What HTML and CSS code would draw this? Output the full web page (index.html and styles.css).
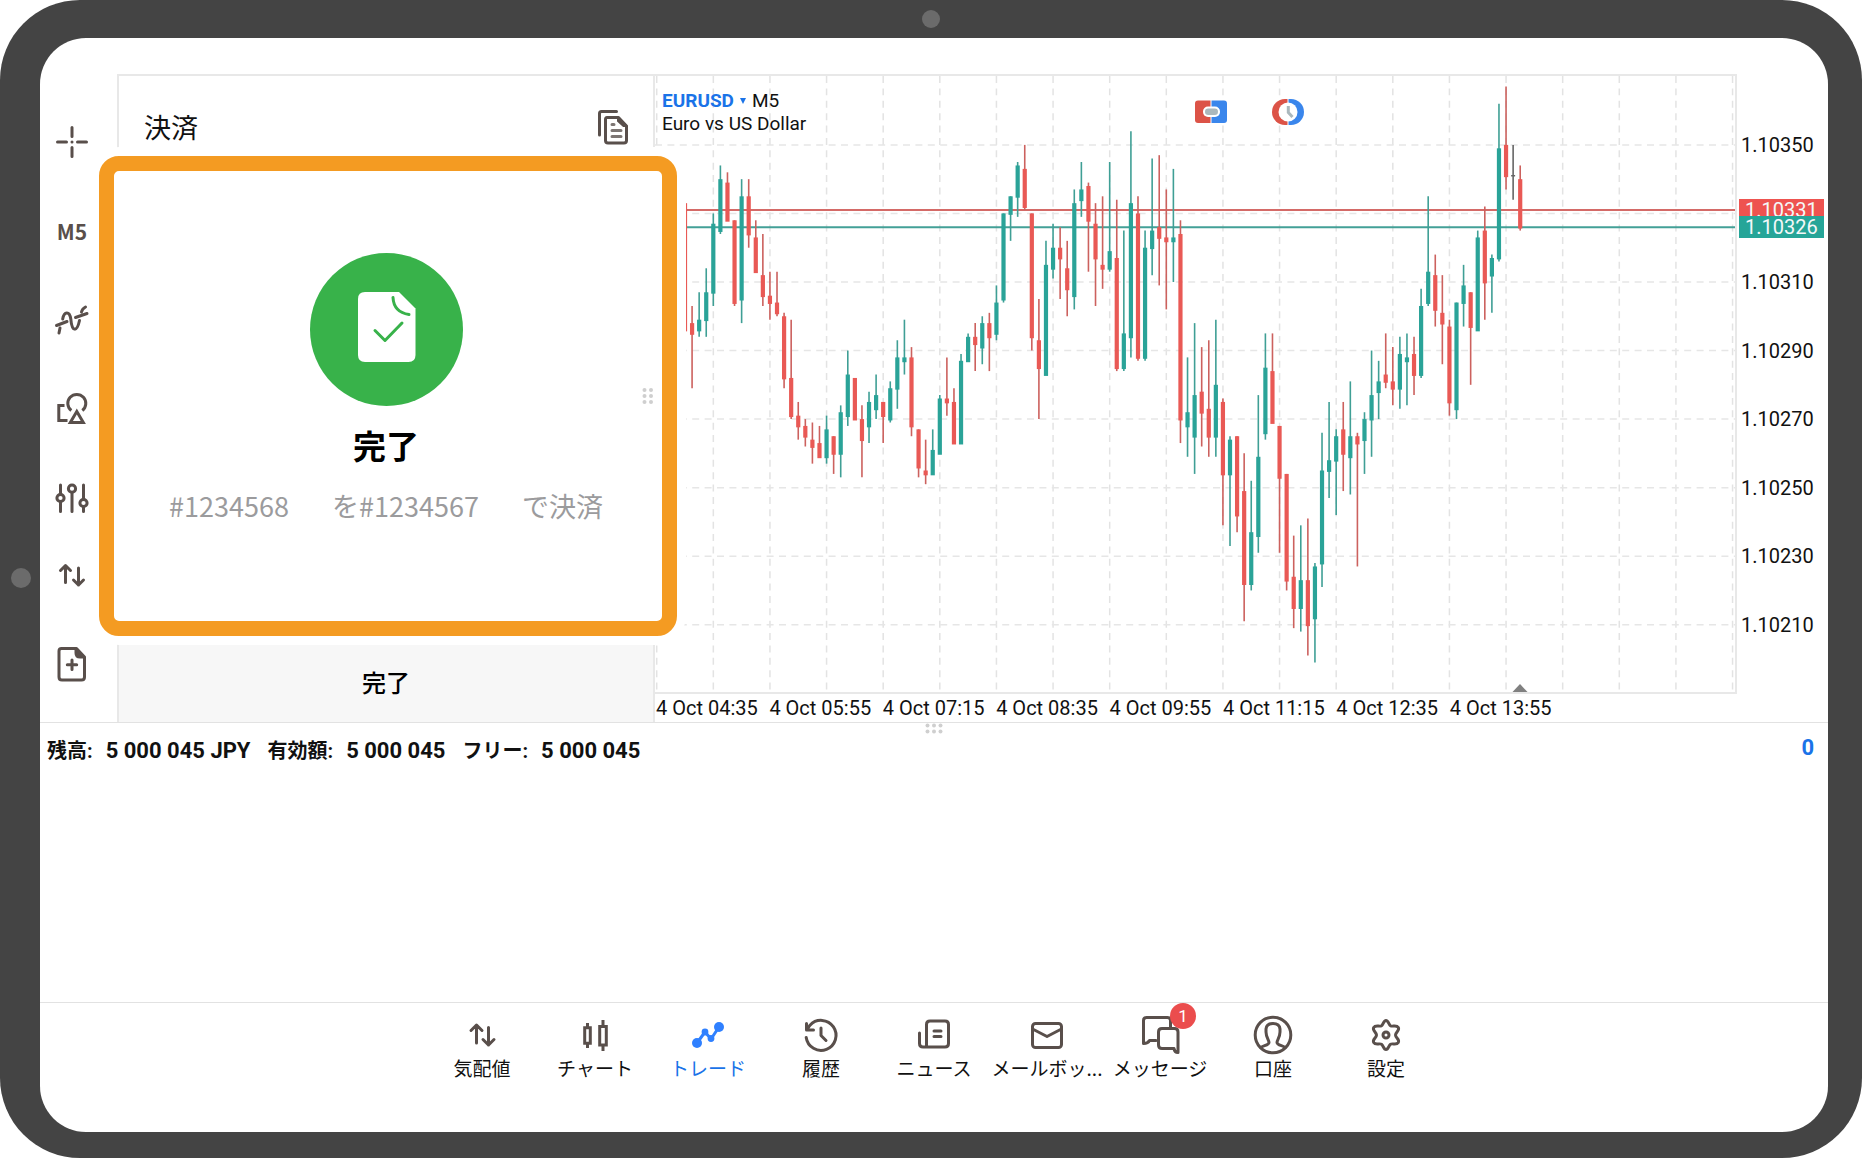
FILE: index.html
```html
<!DOCTYPE html>
<html lang="ja">
<head>
<meta charset="utf-8">
<meta name="viewport" content="width=device-width, initial-scale=1">
<title>決済 - EURUSD</title>
<link rel="stylesheet" href="styles.css">
</head>
<body>
<div class="device">
  <span class="camera camera-top"></span>
  <span class="camera camera-side"></span>
  <div class="screen">
    <main class="workspace">
      <div class="toolbar" role="toolbar" aria-label="チャートツール">
        <div class="tool-group">
          <button class="tool" type="button" aria-label="クロスヘア">
            <svg class="icon" width="36" height="36" viewBox="0 0 36 36"><path d="M3.500 18H12.500M23.500 18H32.500M18 3.500V12.500M18 23.500V32.500M18 18h.01"/></svg>
          </button>
          <button class="tool" type="button">M5</button>
          <button class="tool" type="button" aria-label="インディケータ">
            <svg class="icon" width="36" height="36" viewBox="0 0 36 36"><path d="M2.500 23.500L13 19.500M21.500 15.500L33 11.500M8.700 17C10 9.500 15.500 8.500 16.800 17C18 30.500 23 30 25.500 18.500M5 31l1-5M27.500 10C28 7.500 29.500 6 31.500 5"/></svg>
          </button>
          <button class="tool" type="button" aria-label="オブジェクト">
            <svg class="icon miter" width="36" height="36" viewBox="0 0 36 36"><path d="M10.500 14.500H4.800V29.500H13.500M17.300 19.500A9 9 0 1 1 28.300 19.500M22.800 20.500L16.300 31.500H29.300Z"/></svg>
          </button>
          <button class="tool" type="button" aria-label="設定">
            <svg class="icon" width="36" height="36" viewBox="0 0 36 36"><path d="M6.500 5V14M6.500 22V31.500M18 12.500V31.500M29.500 5V19M29.500 27V31.500"/><circle cx="6.500" cy="18" r="3.600"/><circle cx="18" cy="8.700" r="3.600"/><circle cx="29.500" cy="23" r="3.600"/></svg>
          </button>
        </div>
        <div class="tool-group">
          <button class="tool" type="button" aria-label="取引">
            <svg class="icon" width="36" height="36" viewBox="0 0 36 36"><path d="M11.500 25.500V8.500M6.500 13.500L11.500 8.500L16.500 13.500M24.500 11V28M19.500 23L24.500 28L29.500 23"/></svg>
          </button>
          <button class="tool" type="button" aria-label="新規注文">
            <svg class="icon" width="36" height="36" viewBox="0 0 36 36"><path d="M7.500 2.500H22.500L30.500 11V31Q30.500 34 27.500 34H8Q5 34 5 31V5Q5 2.500 7.500 2.500Z"/><path class="solid" d="M21.500 2.500V7Q21.500 11.500 26 11.500H30.500Z"/><path d="M18 14V23.500M13.300 18.800H22.700"/></svg>
          </button>
        </div>
      </div>

      <section class="panel">
        <header class="panel-head">
          <h1 class="panel-title">決済</h1>
          <button class="plain" type="button" aria-label="コピー">
            <svg class="icon" width="32" height="36" viewBox="0 0 32 36"><path d="M2.500 26V4.500Q2.500 2.500 4.500 2.500H19.500"/><path d="M10 8.500H21.500L29.500 17V31.500Q29.500 34 27 34H11Q8.500 34 8.500 31.500V10.500Q8.500 8.500 10 8.500Z"/><path class="solid" d="M21 8.500V12L26.500 17H29.500Z"/><path class="faint" d="M15 15.500h2M15 21.500H24M15 27.500H24"/></svg>
          </button>
        </header>
        <div class="result">
          <svg class="done-mark" width="153" height="153" viewBox="0 0 153 153" aria-hidden="true">
            <circle cx="76.500" cy="76.500" r="76.500" fill="#38b24a"/>
            <path d="M55 39H89L105.500 55.500V102Q105.500 109 98.500 109H55Q48 109 48 102V46Q48 39 55 39Z" fill="#fff"/>
            <path d="M83 44.500C83.500 54 89 60 99 61.500" fill="none" stroke="#38b24a" stroke-width="3" stroke-linecap="round"/>
            <path d="M65 77.500L75 87.500L92 70" fill="none" stroke="#38b24a" stroke-width="3" stroke-linecap="round" stroke-linejoin="round"/>
          </svg>
          <h2 class="result-title">完了</h2>
          <p class="result-text"><span>#1234568</span><span>を#1234567</span><span>で決済</span></p>
          <svg class="grip grip-side" width="12" height="18" viewBox="0 0 12 18" aria-hidden="true"><circle cx="2.500" cy="3" r="2"/><circle cx="9" cy="3" r="2"/><circle cx="2.500" cy="9" r="2"/><circle cx="9" cy="9" r="2"/><circle cx="2.500" cy="15" r="2"/><circle cx="9" cy="15" r="2"/></svg>
        </div>
        <button class="panel-done" type="button">完了</button>
      </section>

      <section class="chart" aria-label="EURUSD M5">
        <div class="plot">
          <svg class="plot-svg" id="plot" viewBox="0 0 1080 617" preserveAspectRatio="none" aria-hidden="true"></svg>
          <div class="plot-head">
            <div><button class="symbol" type="button">EURUSD<svg class="caret" width="6" height="6" viewBox="0 0 6 6" aria-hidden="true"><path d="M0 0H6L3 6Z" fill="#1a73e8"/></svg></button>M5</div>
            <div>Euro vs US Dollar</div>
          </div>
          <div class="plot-actions">
            <button class="plain" type="button" aria-label="ワンクリック取引">
              <svg width="32" height="26" viewBox="0 0 32 26"><path d="M15.500 1.500H3Q0 1.500 0 4.500V21Q0 24 3 24H15.500Z" fill="#dc5347"/><path d="M16.500 1.500H29Q32 1.500 32 4.500V21Q32 24 29 24H16.500Z" fill="#3a86ec"/><rect x="8" y="7.500" width="17" height="10.500" rx="5" fill="#fff"/><rect x="10" y="9.500" width="13" height="6.500" rx="3.200" fill="#abb8bd"/></svg>
            </button>
            <button class="plain" type="button" aria-label="取引履歴">
              <svg width="32" height="26" viewBox="0 0 32 26"><path d="M15.500 0H13A13 13 0 0 0 13 26H15.500Z" fill="#dc5347"/><path d="M16.500 0H19A13 13 0 0 1 19 26H16.500Z" fill="#3a86ec"/><circle cx="16" cy="13" r="9.500" fill="#fff"/><path d="M16.300 7V13.500L20.500 18" fill="none" stroke="#abb8bd" stroke-width="3"/></svg>
            </button>
          </div>
        </div>
        <div class="prices">
          <span>1.10350</span><span></span><span>1.10310</span><span>1.10290</span><span>1.10270</span><span>1.10250</span><span>1.10230</span><span>1.10210</span>
          <strong class="tag tag-ask">1.10331</strong>
          <strong class="tag tag-bid">1.10326</strong>
        </div>
        <div class="times">
          <span>4 Oct 04:35</span><span>4 Oct 05:55</span><span>4 Oct 07:15</span><span>4 Oct 08:35</span><span>4 Oct 09:55</span><span>4 Oct 11:15</span><span>4 Oct 12:35</span><span>4 Oct 13:55</span>
        </div>
      </section>
    </main>

    <section class="positions">
      <svg class="grip grip-bottom" width="18" height="12" viewBox="0 0 18 12" aria-hidden="true"><circle cx="2.500" cy="2.500" r="2"/><circle cx="9" cy="2.500" r="2"/><circle cx="15.500" cy="2.500" r="2"/><circle cx="2.500" cy="8.500" r="2"/><circle cx="9" cy="8.500" r="2"/><circle cx="15.500" cy="8.500" r="2"/></svg>
      <dl class="balance">
        <div><dt>残高:</dt><dd>5 000 045 JPY</dd></div>
        <div><dt>有効額:</dt><dd>5 000 045</dd></div>
        <div><dt>フリー:</dt><dd>5 000 045</dd></div>
      </dl>
      <output class="profit">0</output>
    </section>

    <nav class="tabs">
      <a class="tab" href="#quotes">
        <svg class="icon" width="40" height="40" viewBox="0 0 40 40"><path d="M14.500 28V10M9 15.500L14.500 10L20 15.500M26.500 12.500V30M21 24.500L26.500 30L32 24.500"/></svg>気配値</a>
      <a class="tab" href="#chart">
        <svg class="icon miter" width="40" height="40" viewBox="0 0 40 40"><path d="M9.700 12.700H15.300V28.300H9.700ZM12.500 8V12M12.500 29V33M24.700 11.500H31.300V30H24.700ZM28 5V11M28 31V36"/></svg>チャート</a>
      <a class="tab active" href="#trade" aria-current="page">
        <svg class="icon" width="40" height="40" viewBox="0 0 40 40"><path d="M9 28L17 17L23 24L31 12"/><g class="dots"><circle cx="9" cy="28" r="5"/><circle cx="17" cy="17" r="3.400"/><circle cx="23" cy="23.500" r="3.400"/><circle cx="31" cy="12" r="5"/></g></svg>トレード</a>
      <a class="tab" href="#history">
        <svg class="icon" width="40" height="40" viewBox="0 0 40 40"><path d="M5.200 22.500A15 15 0 1 0 9 10.200L6 14.500M5.500 8.500V15H12.500M20 13V20.500L25 25.500"/></svg>履歴</a>
      <a class="tab" href="#news">
        <svg class="icon" width="40" height="40" viewBox="0 0 40 40"><path d="M16 6H31Q34.500 6 34.500 9.500V28.500Q34.500 32 31 32H9Q5.500 32 5.500 28.500V18M12.500 32V9.500Q12.500 6 16 6M20 16H27M20 21.500H27"/></svg>ニュース</a>
      <a class="tab" href="#mailbox">
        <svg class="icon" width="40" height="40" viewBox="0 0 40 40"><rect x="5.500" y="8.500" width="29" height="24" rx="3"/><path d="M6.500 14.500L20 21.500L33.500 14.500"/></svg>メールボッ...</a>
      <a class="tab" href="#messages">
        <svg class="icon" width="40" height="40" viewBox="0 0 40 40"><path d="M16 25.500H9.500Q8 28.500 3.500 28.500V5.500Q3.500 2.500 6.500 2.500H27.500Q30.500 2.500 30.500 5.500V12"/><path d="M22 13.500H34.500Q38 13.500 38 17V37.500Q34.500 37.500 34 33.500H22Q18.500 33.500 18.500 30V17Q18.500 13.500 22 13.500Z"/></svg><span class="badge">1</span>メッセージ</a>
      <a class="tab" href="#accounts">
        <svg class="icon" width="40" height="40" viewBox="0 0 40 40"><circle cx="20" cy="20" r="17.800"/><path d="M8 32.500C9.500 30.500 16 30.500 16 27.500C16 25 13 22 13 17V14Q13.500 8.500 20 8.500Q26.500 8.500 27 14V17C27 22 24 25 24 27.500C24 30.500 30.500 30.500 32 32.500"/></svg>口座</a>
      <a class="tab" href="#settings">
        <svg class="icon" width="40" height="40" viewBox="0 0 40 40"><path d="M20 5.500C22.500 5.500 22.500 9.500 24.500 10.800C26.500 12 30.500 9.500 32.300 12.500C34 15.500 29.500 17 29.500 20C29.500 23 34 24.500 32.300 27.500C30.500 30.500 26.500 28 24.500 29.200C22.500 30.500 22.500 34.500 20 34.500C17.500 34.500 17.500 30.500 15.500 29.200C13.500 28 9.500 30.500 7.700 27.500C6 24.500 10.500 23 10.500 20C10.500 17 6 15.500 7.700 12.500C9.500 9.500 13.500 12 15.500 10.800C17.500 9.500 17.500 5.500 20 5.500Z"/><circle cx="20" cy="20" r="3"/></svg>設定</a>
    </nav>
  </div>
</div>
<script src="chart.js"></script>
</body>
</html>
```
FILE: styles.css
```css
* {
  box-sizing: border-box;
}

body {
  margin: 0;
  background: #fff;
  color: #111;
  font-family: Roboto, "Noto Sans CJK JP", sans-serif;
  font-size: 20px;
}

h1, h2, p, dl, dd {
  margin: 0;
}

button {
  margin: 0;
  padding: 0;
  border: 0;
  background: none;
  color: inherit;
  font: inherit;
  cursor: pointer;
}

svg {
  display: block;
}

.device {
  position: relative;
  display: flex;
  min-height: 100vh;
  padding: 38px 34px 26px 40px;
  border-radius: 80px;
  background: #444;
}

.camera {
  position: absolute;
  width: 18px;
  height: 18px;
  border-radius: 50%;
  background: #6b6b6b;
}

.camera-top {
  top: 10px;
  left: calc(50% - 9px);
}

.camera-side {
  top: calc(50% - 11px);
  left: 11px;
  width: 20px;
  height: 20px;
}

.screen {
  display: flex;
  flex: 1;
  flex-direction: column;
  min-width: 0;
  padding-top: 36px;
  border-radius: 46px;
  background: #fff;
}

.workspace {
  display: grid;
  flex: 1;
  grid-template-columns: 77px 538px 1fr;
  border-bottom: 1px solid #e2e2e2;
}

.icon {
  fill: none;
  stroke: #594f4b;
  stroke-width: 3;
  stroke-linecap: round;
  stroke-linejoin: round;
}

.icon.miter {
  stroke-linecap: butt;
  stroke-linejoin: miter;
}

.icon .solid {
  fill: #594f4b;
  stroke-width: 2;
}

.icon .faint {
  stroke: #7d7673;
}

/* Left toolbar */
.toolbar {
  display: flex;
  flex-direction: column;
  justify-content: space-between;
  padding: 34px 13px 25px 0;
}

.tool-group {
  display: flex;
  flex-direction: column;
  gap: 22px;
}

.tool {
  display: flex;
  align-items: center;
  justify-content: center;
  height: 67px;
  color: #594f4b;
  font-family: "Noto Sans CJK JP", sans-serif;
  font-size: 21px;
  font-weight: 700;
  line-height: 30px;
}

/* Order panel */
.panel {
  display: flex;
  flex-direction: column;
  border: solid #e8e8e8;
  border-width: 2px 2px 0;
}

.panel-head {
  display: flex;
  align-items: center;
  justify-content: space-between;
  height: 72px;
  padding: 29px 24px 0 25px;
}

.panel-title {
  padding-top: 4px;
  font-size: 27px;
  font-weight: 400;
  line-height: 40px;
}

.result {
  position: relative;
  z-index: 1;
  display: flex;
  flex: 1;
  flex-direction: column;
  align-items: center;
  margin: 8px -24px 9px -20px;
  padding: 82px 4px 0 0;
  border: 15px solid #f49b22;
  border-radius: 20px;
  background: #fff;
  box-shadow: 0 0 0 9px #fff;
}

.result-title {
  margin-top: 18px;
  color: #000;
  font-size: 33px;
  font-weight: 700;
  line-height: 48px;
}

.result-text {
  display: flex;
  gap: 43px;
  margin-top: 14px;
  color: #9b9b9d;
  font-family: "Noto Sans CJK JP", sans-serif;
  font-size: 27px;
  line-height: 40px;
}

.grip {
  position: absolute;
  fill: #cfcfcf;
}

.grip-side {
  top: 50%;
  right: 8px;
  transform: translateY(-50%);
}

.grip-bottom {
  top: 0;
  left: 50%;
  transform: translateX(-50%);
}

.panel-done {
  height: 77px;
  padding-bottom: 4px;
  background: #f7f7f7;
  color: #000;
  font-size: 24px;
  font-weight: 500;
}

/* Chart */
.chart {
  display: grid;
  grid-template-rows: 1fr 28px;
  grid-template-columns: 1fr 91px;
  min-width: 0;
}

.plot {
  position: relative;
  border: solid #e8e8e8;
  border-width: 2px 2px 2px 0;
}

.plot-svg {
  position: absolute;
  width: 100%;
  height: 100%;
}

.plot-head {
  position: absolute;
  top: 13px;
  left: 7px;
  font-size: 19px;
  line-height: 23px;
}

.symbol {
  display: inline-flex;
  align-items: center;
  gap: 6px;
  margin-right: 6px;
  color: #1a73e8;
  font-weight: 700;
}

.plot-actions {
  position: absolute;
  top: 23px;
  left: 50%;
  display: flex;
  gap: 45px;
}

.prices {
  position: relative;
  display: flex;
  flex-direction: column;
  padding: 37px 0 35px 4px;
}

.prices span {
  display: flex;
  flex: 1;
  align-items: center;
}

.tag {
  position: absolute;
  left: 2px;
  width: 85px;
  padding-left: 6px;
  color: #f4f8f8;
  font-weight: 400;
  line-height: 22px;
  transform: translateY(-50%);
}

.tag-ask {
  top: 22%;
  background: #ee5350;
}

.tag-bid {
  top: calc(22% + 17px);
  background: #26a598;
}

.times {
  display: grid;
  grid-template-columns: repeat(8, 10.49%);
  grid-column: 1 / 2;
  align-items: center;
  padding-left: 1px;
  line-height: 26px;
  white-space: nowrap;
}

/* Account summary */
.positions {
  position: relative;
  display: flex;
  justify-content: space-between;
  height: 279px;
  padding: 12px 14px 0 7px;
}

.balance {
  display: flex;
  gap: 17px;
  height: 32px;
}

.balance div {
  display: flex;
  gap: 13px;
  align-items: center;
}

.balance dt {
  font-size: 20px;
  font-weight: 700;
  line-height: 30px;
}

.balance dd {
  font-size: 22px;
  font-weight: 700;
  line-height: 30px;
}

.profit {
  color: #1a73e8;
  font-size: 22px;
  font-weight: 700;
  line-height: 26px;
}

/* Bottom tabs */
.tabs {
  display: flex;
  justify-content: center;
  height: 130px;
  padding-top: 12px;
  border-top: 1px solid #e2e2e2;
}

.tab {
  position: relative;
  display: flex;
  flex: 0 1 113px;
  flex-direction: column;
  align-items: center;
  color: #111;
  font-family: "Noto Sans CJK JP", sans-serif;
  font-size: 19px;
  line-height: 26px;
  white-space: nowrap;
  text-decoration: none;
}

.tab.active {
  color: #1a73e8;
}

.tab.active .icon {
  stroke: #2f80ff;
}

.dots {
  fill: #2f80ff;
  stroke: none;
}

.badge {
  position: absolute;
  top: -12px;
  left: calc(50% + 10px);
  width: 26px;
  height: 26px;
  border-radius: 50%;
  background: #eb4d4d;
  color: #fff;
  font-family: Roboto, sans-serif;
  font-size: 17px;
  line-height: 26px;
  text-align: center;
}
```
FILE: chart.js
```javascript
// Candles: [direction, high, body top, body bottom, low], in points above 1.10000.
const candles = [
  ['d',333,333,296,296],
  ['d',303,298,295,279],['u',307,299,296,294],['u',314,307,299,294],['u',330,327,307,303],
  ['u',344,340,325,324],['d',342,339,328,328],['d',328,328,304,303],['u',340,335,305,298],
  ['d',340,335,324,320],['d',328,323,313,313],['d',324,312,306,303],['d',313,306,304,299],
  ['d',313,304,301,300],['d',301,300,282,279],['d',299,282,271,270],['d',275,271,268,264],
  ['d',270,268,265,262],['d',269,264,262,257],['d',268,263,259,259],['u',271,267,259,257],
  ['d',265,265,260,254],['u',274,272,260,253],['u',290,283,271,268],['d',282,282,270,270],
  ['d',274,270,264,253],['u',278,275,268,263],['u',283,277,273,270],['d',275,275,271,263],
  ['u',281,279,270,269],['u',293,288,279,273],['u',299,288,287,283],['d',291,288,268,265],
  ['d',267,267,256,253],['d',264,255,254,251],['u',267,261,254,254],['u',277,276,260,260],
  ['d',288,276,275,271],['d',279,275,263,263],['u',289,287,263,263],['u',295,294,287,287],
  ['d',298,294,292,284],['u',300,298,291,286],['d',301,298,294,284],['u',309,304,295,293],
  ['u',330,330,305,304],['u',335,335,330,322],['u',345,344,335,329],['d',350,343,332,331],
  ['d',330,330,294,290],['d',305,293,285,270],['u',322,315,283,283],['u',327,320,314,311],
  ['d',326,320,317,305],['d',322,314,308,300],['u',337,333,306,302],['u',345,337,334,329],
  ['d',339,338,328,313],['d',333,327,317,303],['d',335,315,314,308],['u',345,319,314,313],
  ['d',334,317,285,284],['u',325,295,285,284],['u',354,333,294,288],['d',335,330,288,287],
  ['u',325,320,288,287],['u',346,325,320,312],['d',347,326,323,309],['d',337,323,322,302],
  ['u',343,323,322,310],['d',328,324,270,263],['u',288,272,268,259],['u',298,277,265,254],
  ['d',291,278,272,262],['d',293,273,265,259],['u',299,280,265,259],['d',276,275,254,239],
  ['u',265,264,254,233],['d',265,265,242,237],['d',260,249,222,211],['u',252,237,222,220],
  ['u',277,259,236,231],['u',295,285,266,264],['d',295,284,269,269],['d',268,268,253,231],
  ['d',254,254,223,220],['d',236,224,215,209],['u',239,223,215,208],['d',241,223,210,201],
  ['u',228,227,212,199],['u',266,255,228,221],['u',275,258,255,247],['u',267,265,258,242],
  ['d',275,267,260,249],['u',281,265,259,248],['d',266,265,263,227],['u',272,270,264,254],
  ['u',290,277,270,259],['u',287,281,278,270],['d',295,283,281,279],['d',291,281,279,274],
  ['u',294,289,279,273],['u',295,288,287,274],['d',294,289,283,277],['u',308,303,283,282],
  ['u',335,313,304,303],['d',318,312,302,297],['d',312,301,298,286],['d',299,297,275,271],
  ['u',304,304,273,270],['u',315,309,304,297],['d',307,307,297,280],['u',325,323,296,296],
  ['d',332,325,310,299],['u',318,317,312,301],['u',362,349,317,316],['d',367,350,341,337],
  ['n',350,341,341,334],['d',344,340,326,325]
];

const WIDTH = 1080;
const HEIGHT = 617;
const STEP = 7.078;
const FIRST_X = 30;
const wick = { u: '#3f9f95', d: '#cc615e', n: '#666' };
const body = { u: '#2aa398', d: '#e95955', n: '#666' };
const y = points => 69 + (350 - points) * 3.433;

const line = (x1, y1, x2, y2, stroke, extra = '') =>
  `<line x1="${x1}" y1="${y1}" x2="${x2}" y2="${y2}" stroke="${stroke}" ${extra}/>`;

let out = '';
for (let i = 0; i < 20; i++) {
  const x = 1.7 + i * STEP * 8;
  out += line(x, 0, x, HEIGHT, '#e3e3e3', 'stroke-width="1.5" stroke-dasharray="7 5.4"');
}
for (let p = 350; p >= 210; p -= 20) {
  out += line(0, y(p), WIDTH, y(p), '#e6e6e6', 'stroke-width="1.5" stroke-dasharray="7 5.4"');
}
out += line(0, y(331), WIDTH, y(331), '#d46a67', 'stroke-width="2"');
out += line(0, y(326), WIDTH, y(326), '#43a097', 'stroke-width="2"');

candles.forEach(([dir, high, top, bottom, low], i) => {
  const x = FIRST_X + i * STEP;
  out += line(x, y(high), x, y(low), wick[dir], 'stroke-width="1.6"');
  if (top === bottom) {
    out += line(x - 2, y(top), x + 2, y(top), body[dir], 'stroke-width="1.5"');
  } else {
    out += `<rect x="${x - 2.1}" y="${y(top)}" width="4.2" height="${y(bottom) - y(top) + 1.4}" fill="${body[dir]}"/>`;
  }
});
out += `<path d="M857.500 ${HEIGHT}L865 ${HEIGHT - 8}L872.500 ${HEIGHT}Z" fill="#808080"/>`;

document.getElementById('plot').innerHTML = out;
```
